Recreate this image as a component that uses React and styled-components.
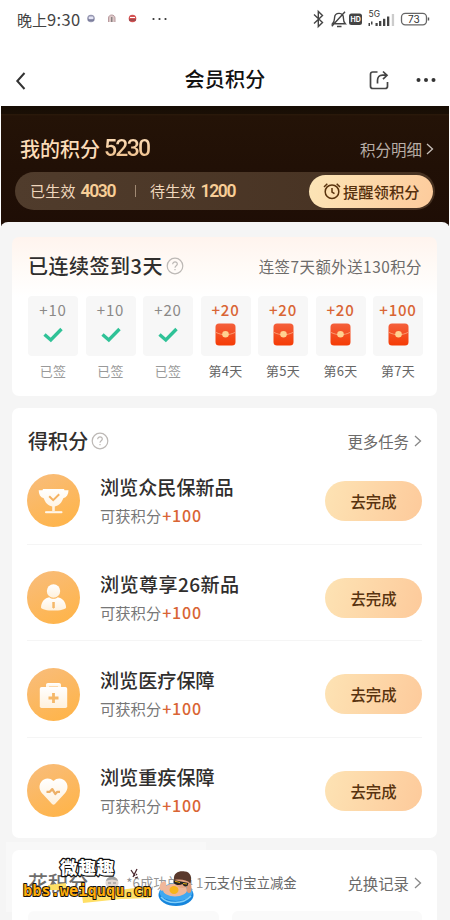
import styled, { createGlobalStyle } from 'styled-components';

const GlobalStyle = createGlobalStyle`
    * {
        box-sizing: border-box;
    }

    body {
        margin: 0;
        background: #fff;
        font-family: "Noto Sans CJK SC", "Noto Sans", sans-serif;
    }
`;

const days = [
    { points: '+10', label: '已签', done: true },
    { points: '+10', label: '已签', done: true },
    { points: '+20', label: '已签', done: true },
    { points: '+20', label: '第4天' },
    { points: '+20', label: '第5天' },
    { points: '+20', label: '第6天' },
    { points: '+100', label: '第7天' },
];

const tasks = [
    { icon: 'cup', title: '浏览众民保新品' },
    { icon: 'person', title: '浏览尊享26新品', spacing: '0.4px' },
    { icon: 'kit', title: '浏览医疗保障' },
    { icon: 'heart', title: '浏览重疾保障' },
];

const Chevron = ({ color = '#888' }) => (
    <svg width="8" height="14" viewBox="0 0 8 14" fill="none" stroke={color} strokeWidth="1.3">
        <path d="M1 2l5.5 5L1 12" />
    </svg>
);

const Help = () => (
    <svg width="18" height="18" viewBox="0 0 18 18" fill="none" stroke="#bcb8b5" strokeWidth="1.2">
        <circle cx="9" cy="9" r="7.8" />
        <path d="M6.7 7.2c0-3.2 4.8-3 4.6-.1-.1 1.6-2.3 1.7-2.3 3.6M9 12.1v1.2" />
    </svg>
);

const Check = () => (
    <svg width="20" height="16" viewBox="0 0 20 16">
        <path d="M1.5 7.5l6.3 5.500L18.500 2" fill="none" stroke="#2fc297" strokeWidth="3.4" />
    </svg>
);

const Envelope = () => (
    <svg width="21" height="23" viewBox="0 0 21 23">
        <defs>
            <linearGradient id="env" x1="0" y1="0" x2="0" y2="1">
                <stop offset="0" stopColor="#f4603c" />
                <stop offset="1" stopColor="#f53b05" />
            </linearGradient>
        </defs>
        <rect x=".5" y=".5" width="20" height="22" rx="3.5" fill="url(#env)" />
        <path d="M.8 9.300c6 3.200 13.400 3.200 19.400 0" fill="none" stroke="#f99a70" strokeWidth="1" />
        <circle cx="10.500" cy="11.200" r="3.300" fill="#ffd190" />
    </svg>
);

const StatusIcons = () => (
    <svg width="120" height="22" viewBox="0 0 120 22" fill="none" stroke="#444" strokeWidth="1.4">
        <path d="M2 6.500l8.500 8-4.200 4V3.500l4.200 4L2 15.500" />
        <path d="M20.500 15.800h12.800c-2-2-1.900-4-1.900-6 0-5.600-8.200-5.900-8.800-.5-.2 2.400 0 4.400-2.100 6.500zM25 18.500h4.500M19.800 18.300L33 3.800" />
        <rect x="37" y="5.500" width="13" height="11.500" rx="2.500" fill="#444" stroke="none" />
        <g fill="#444" stroke="none">
            <rect x="56.500" y="15" width="1.500" height="3" />
            <rect x="59" y="13.500" width="1.500" height="3" />
            <rect x="63.500" y="15" width="2.200" height="3" />
            <rect x="67" y="13" width="2.300" height="5" />
            <rect x="71" y="10.800" width="2.300" height="7.200" />
            <rect x="75" y="8.500" width="2.300" height="9.500" />
            <rect x="79.800" y="6" width="2.300" height="12" fill="#ccc" />
        </g>
        <rect x="89.500" y="5.300" width="25" height="11.500" rx="3.800" stroke="#666" strokeWidth="1.300" />
        <path d="M116.500 9.500v3" stroke="#555" />
        <g fill="#333" stroke="none" fontFamily="Inter, sans-serif">
            <text x="38.600" y="13.900" fontSize="7" fontWeight="700" fill="#fff">HD</text>
            <text x="56.500" y="9" fontSize="8.500">5G</text>
            <text x="96" y="14.700" fontSize="10">73</text>
        </g>
    </svg>
);

const TaskIcon = ({ type }) => (
    <svg width="53" height="53" viewBox="0 0 53 53">
        <defs>
            <linearGradient id="disc" x1="0" y1="0" x2=".5" y2="1">
                <stop offset="0" stopColor="#f8bd7d" />
                <stop offset="1" stopColor="#feb54e" />
            </linearGradient>
            <linearGradient id="glyph" x1="0" y1="0" x2="0" y2="1">
                <stop offset="0" stopColor="#fff" />
                <stop offset="1" stopColor="#fff1dc" />
            </linearGradient>
        </defs>
        <circle cx="26.500" cy="26.500" r="26.500" fill="url(#disc)" />
        {type === 'cup' && (
            <g fill="url(#glyph)">
                <path d="M16 15h21l.5 1.300h4c0 4-1.800 7-5.200 8-1.600 4.500-4.400 7.500-8.500 8.200V37h-2.600v-4.500c-4.100-.7-6.900-3.700-8.500-8.200-3.400-1-5-4-5-8h3.800z" />
                <rect x="18" y="37.300" width="17.500" height="1.900" rx=".9" />
                <path d="M22.200 22.300l4 3.800 6-5.800" fill="none" stroke="#f5b261" strokeWidth="2" />
            </g>
        )}
        {type === 'person' && (
            <g fill="url(#glyph)">
                <circle cx="26.500" cy="20" r="6.700" />
                <path d="M14 36.500c.3-6.300 4-9.400 8.200-10.300 2.300 2.200 6.300 2.200 8.600 0 4.200 .9 8 4 8.300 10.300C38.500 40.600 14.600 40.600 14 36.500z" />
                <path d="M25.300 31h2.500v5.300l-1.200 1.500-1.300-1.500z" fill="#f5b869" />
            </g>
        )}
        {type === 'kit' && (
            <g fill="url(#glyph)">
                <path d="M19 20.500v-3.500c0-1.200.8-2 2-2h11c1.200 0 2 .8 2 2v3.500h-3v-2H22v2z" />
                <rect x="12.800" y="19" width="27.400" height="21" rx="1.800" />
                <path d="M26.500 25v10M21.500 30h10" stroke="#f5b869" strokeWidth="2.800" />
            </g>
        )}
        {type === 'heart' && (
            <g>
                <path d="M26.500 17c4-4.200 9.800-2.900 12.400.9 3 4.300 1.500 8.700-1.900 12.400L28 40c-1 1-2 1-3 0l-9-9.700c-3.400-3.700-4.900-8.100-1.900-12.400 2.600-3.800 8.400-5.100 12.400-.9z" fill="url(#glyph)" />
                <path d="M19.500 27.800h3.300l2.500-2.700 3 4.900 2-2.200h2.700" fill="none" stroke="#edb067" strokeWidth="2.300" strokeLinejoin="round" />
            </g>
        )}
    </svg>
);

export default function App() {
    return (
        <Page>
            <GlobalStyle />

            <StatusBar>
                <Clock>晚上<span>9:30</span></Clock>
                <svg width="86" height="14" viewBox="0 0 86 14">
                    <circle cx="5" cy="6.500" r="3.800" fill="#9697b1" />
                    <rect x="2.800" y="4.500" width="4.500" height="3" rx="1" fill="#e5e5f5" />
                    <path d="M2 8h6" stroke="#65698a" />
                    <path d="M22.500 10V6c0-4 6.500-4 6.500 0v4" fill="#dcc7c7" stroke="#b99b9f" />
                    <path d="M25.800 5v5" stroke="#666" />
                    <circle cx="46.500" cy="6.500" r="3.800" fill="#d45252" />
                    <path d="M44 5.500h5" stroke="#fff" />
                    <path d="M43 8h7" stroke="#774047" />
                    <circle cx="67.500" cy="7" r="1.100" fill="#333" />
                    <circle cx="73.500" cy="7" r="1.100" fill="#333" />
                    <circle cx="79.500" cy="7" r="1.100" fill="#333" />
                </svg>
                <StatusRight><StatusIcons /></StatusRight>
            </StatusBar>

            <NavBar>
                <svg width="12" height="20" viewBox="0 0 12 20" fill="none" stroke="#333" strokeWidth="2">
                    <path d="M9.500 2L2.300 10l7.200 8" />
                </svg>
                <NavTitle>会员积分</NavTitle>
                <NavActions>
                    <svg width="20" height="20" viewBox="0 0 20 20" fill="none" stroke="#444" strokeWidth="1.700">
                        <path d="M8.500 2H3.800C2.300 2 1.500 2.800 1.500 4.200v12c0 1.500.8 2.300 2.300 2.300h12.400c1.500 0 2.300-.8 2.300-2.300V12" />
                        <path d="M8.500 13.500v-3c0-3.500 1.800-5.300 5-5.300h4M14 1.500l4 3.800-4 3.800" />
                    </svg>
                    <svg width="20" height="6" viewBox="0 0 20 6" fill="#333">
                        <circle cx="2.500" cy="3" r="2" />
                        <circle cx="10" cy="3" r="2" />
                        <circle cx="17.500" cy="3" r="2" />
                    </svg>
                </NavActions>
            </NavBar>

            <Hero>
                <HeroTop>
                    <HeroTitle>我的积分<HeroNumber>5230</HeroNumber></HeroTitle>
                    <HeroLink>积分明细<Chevron color="#c9c1bb" /></HeroLink>
                </HeroTop>
                <PointsBar>
                    <PointsItem>已生效<b>4030</b></PointsItem>
                    <PointsDivider />
                    <PointsItem>待生效<b>1200</b></PointsItem>
                    <RemindButton>
                        <svg width="18" height="18" viewBox="0 0 18 18" fill="none" stroke="#59330d" strokeWidth="1.500">
                            <circle cx="9" cy="9.700" r="6.800" />
                            <path d="M9 6v4l2.500 1.700M1 5l3.300-3.300M17 5l-3.300-3.300" />
                        </svg>
                        提醒领积分
                    </RemindButton>
                </PointsBar>
            </Hero>

            <Content>
                <CheckInCard>
                    <CardHeader>
                        <CardTitle $spacing="0.5px">已连续签到3天</CardTitle>
                        <Help />
                        <CardExtra $spacing="0.5px">连签7天额外送130积分</CardExtra>
                    </CardHeader>
                    <Days>
                        {days.map((day, index) => (
                            <Day key={index}>
                                <DayTile>
                                    <DayPoints $done={day.done}>{day.points}</DayPoints>
                                    <DayIcon>{day.done ? <Check /> : <Envelope />}</DayIcon>
                                </DayTile>
                                <DayLabel $done={day.done}>{day.label}</DayLabel>
                            </Day>
                        ))}
                    </Days>
                </CheckInCard>

                <TaskCard>
                    <CardHeader $tall>
                        <CardTitle>得积分</CardTitle>
                        <Help />
                        <CardExtra>更多任务<Chevron /></CardExtra>
                    </CardHeader>
                    {tasks.map((task) => (
                        <TaskRow key={task.icon}>
                            <TaskIcon type={task.icon} />
                            <TaskText>
                                <TaskTitle $spacing={task.spacing}>{task.title}</TaskTitle>
                                <TaskReward>可获积分<b>+100</b></TaskReward>
                            </TaskText>
                            <GoButton>去完成</GoButton>
                        </TaskRow>
                    ))}
                </TaskCard>

                <SpendCard>
                    <CardHeader $short>
                        <CardTitle>花积分</CardTitle>
                        <Ticker>
                            <svg width="14" height="14" viewBox="0 0 14 14">
                                <circle cx="7" cy="7" r="6.500" fill="#d5c5bd" />
                                <path d="M1 5c1-6 11-6 12 0-4-2-8-2-12 0z" fill="#777" />
                                <path d="M3 7h3M8 7h3" stroke="#555" />
                            </svg>
                            <span>*6成功兑换 1元支付宝立减金</span>
                        </Ticker>
                        <CardExtra>兑换记录<Chevron /></CardExtra>
                    </CardHeader>
                    <Goods>
                        <GoodsItem />
                        <GoodsItem />
                    </Goods>
                </SpendCard>
            </Content>

            <Watermark>
                <svg width="200" height="70" viewBox="0 0 200 70">
                    <path d="M42 43l18-2v7H42zM76 53l68-9 1 12-30 1-38 4z" fill="#ffdf65" />
                    <path d="M125 28l4 6M131 33l-1-1M127 35l4-8M129 36l3-1" stroke="#4b2930" strokeWidth="1.300" />
                    <g fontWeight="900" paintOrder="stroke" stroke="#111" strokeLinejoin="round">
                        <text x="54" y="32" fontFamily="Noto Sans CJK SC, sans-serif" fontSize="17.500" textLength="54" strokeWidth="2.500" fill="#fff">微趣趣</text>
                        <text x="17" y="53.500" fontFamily="DejaVu Sans Mono, monospace" fontSize="16.500" textLength="129" lengthAdjust="spacingAndGlyphs" strokeWidth="2" fill="#ffad0a">bbs.weiququ.cn</text>
                    </g>
                    <ellipse cx="170" cy="53" rx="17.500" ry="11" fill="#1685dc" />
                    <ellipse cx="170" cy="50" rx="16.500" ry="9" fill="#3fa8f2" />
                    <path d="M155 55c6 7 22 8 30-1" fill="none" stroke="#83cff9" strokeWidth="1.500" />
                    <ellipse cx="169" cy="48" rx="12" ry="6.500" fill="#efb79b" />
                    <ellipse cx="168" cy="48" rx="4.500" ry="4" fill="#f7b51b" />
                    <ellipse cx="157" cy="44" rx="3" ry="5" transform="rotate(20 157 44)" fill="#f1b79b" />
                    <ellipse cx="183" cy="46" rx="2.500" ry="5" fill="#dd9876" />
                    <ellipse cx="176.500" cy="38.500" rx="8" ry="7.500" fill="#e7a684" />
                    <path d="M168 38c-1-8 6-9.500 11-8.500 5 .5 7.500 5 5.500 12-4-4-10-4.500-16.500-3.500z" fill="#5a392c" />
                    <path d="M167.500 38l15 3-1 3c-3 1-4 0-5-2-3 2-7 1-9-1z" fill="#252323" />
                    <path d="M169 39.300l5 1.200M177 41.500l4 .5" stroke="#e3aa13" />
                </svg>
            </Watermark>
        </Page>
    );
};

const Page = styled.div`
    position: relative;
    display: flex;
    flex-direction: column;
    width: 450px;
    height: 920px;
    overflow: hidden;
`;

const StatusBar = styled.div`
    display: flex;
    flex: none;
    align-items: center;
    height: 38px;
    padding: 0 18px 0 17px;
`;

const Clock = styled.div`
    width: 69px;
    color: #444;
    font-size: 15px;
    line-height: 20px;
    white-space: nowrap;

    span {
        font-size: 16.5px;
        letter-spacing: 0.4px;
    }
`;

const StatusRight = styled.div`
    margin-left: auto;
    height: 22px;
    width: 120px;
`;

const NavBar = styled.div`
    display: grid;
    flex: none;
    grid-template-columns: 90px 1fr 90px;
    align-items: center;
    height: 68px;
    padding: 16px 14px 0 15px;

    > svg {
        margin-top: 2px;
    }
`;

const NavTitle = styled.div`
    padding: 0 1px 2px 0;
    text-align: center;
    color: #111;
    font-size: 20px;
    font-weight: 500;
    line-height: 28px;
    letter-spacing: 0.2px;
`;

const NavActions = styled.div`
    display: flex;
    align-items: center;
    justify-content: flex-end;
    gap: 27px;
`;

const Hero = styled.div`
    flex: none;
    height: 132px;
    margin: 0 1px;
    padding: 8px 14px 0;
    background: linear-gradient(#170d04 0, #1a0f05 8px, #2b1a0b 8px, #241307 10px, #211006 60px, #1e0d05);
`;

const HeroTop = styled.div`
    display: flex;
    align-items: center;
    justify-content: space-between;
    height: 58px;
    padding: 12px 1px 0 5px;
`;

const HeroTitle = styled.div`
    display: flex;
    align-items: center;
    color: #fbdcb8;
    font-size: 20px;
    font-weight: 500;
    line-height: 28px;
`;

const HeroNumber = styled.span`
    margin-left: 4px;
    font-family: Roboto, sans-serif;
    font-size: 23px;
    letter-spacing: -1.7px;
    background: linear-gradient(#ffe1bd, #eab983);
    background-clip: text;
    color: transparent;
`;

const HeroLink = styled.div`
    display: flex;
    align-items: center;
    gap: 4px;
    color: #b9aea6;
    font-size: 15.5px;
    line-height: 22px;
`;

const PointsBar = styled.div`
    display: flex;
    align-items: center;
    height: 38px;
    padding: 0 2px 0 15px;
    border-radius: 19px;
    background: linear-gradient(90deg, #503c2c, #463121);
`;

const PointsItem = styled.div`
    display: flex;
    align-items: center;
    color: #f0d8bd;
    font-size: 15px;
    line-height: 22px;
    letter-spacing: 0.2px;

    b {
        margin-left: 5px;
        color: #f8ce97;
        font-family: Roboto, sans-serif;
        font-size: 17.5px;
        font-weight: 600;
        letter-spacing: -1.4px;
    }
`;

const PointsDivider = styled.div`
    width: 1px;
    height: 12px;
    margin: 0 14px 0 20px;
    background: #a18a74;
`;

const RemindButton = styled.button`
    display: flex;
    align-items: center;
    gap: 2px;
    width: 124px;
    height: 33px;
    margin-left: auto;
    padding: 0 0 0 14px;
    border: none;
    border-radius: 17px;
    background: linear-gradient(110deg, #fce5b7, #fdcb9c);
    color: #55300d;
    font-family: inherit;
    font-size: 15.3px;
    font-weight: 500;
    white-space: nowrap;
`;

const Content = styled.div`
    display: flex;
    flex-direction: column;
    flex: none;
    gap: 12px;
    margin-top: -16px;
    padding: 15px 13px 0 12px;
    border-radius: 8px 8px 0 0;
    background: #f5f5f5;
`;

const Card = styled.div`
    flex: none;
    padding: 0 15px 0 16px;
    border-radius: 7px;
    background: #fff;
`;

const CheckInCard = styled(Card)`
    height: 159px;
    background: linear-gradient(#fff4ee, #fffaf6 28px, #fff 60px);
`;

const TaskCard = styled(Card)`
    height: 430px;
`;

const SpendCard = styled(Card)`
    height: 80px;
`;

const CardHeader = styled.div`
    display: flex;
    align-items: center;
    height: ${({ $tall, $short }) => ($tall ? '40px' : $short ? '61px' : '59px')};
    padding: ${({ $tall, $short }) => ($tall ? '25px 0 0' : $short ? '4px 0 0' : '0 0 2px')};
`;

const CardTitle = styled.div`
    margin-right: 3px;
    color: #302e2d;
    font-size: 20px;
    font-weight: 500;
    line-height: 28px;
    letter-spacing: ${({ $spacing }) => $spacing || '0.1px'};
`;

const CardExtra = styled.div`
    display: flex;
    align-items: center;
    gap: 5px;
    margin-left: auto;
    color: #6d6b6a;
    font-size: 15.4px;
    line-height: 22px;
    letter-spacing: ${({ $spacing }) => $spacing || '0'};
`;

const Days = styled.div`
    display: grid;
    grid-template-columns: repeat(7, 50px);
    gap: 7.5px;
`;

const Day = styled.div`
    display: flex;
    flex-direction: column;
    align-items: center;
`;

const DayTile = styled.div`
    display: flex;
    flex-direction: column;
    align-items: center;
    width: 50px;
    height: 60px;
    padding-top: 4px;
    border-radius: 4px;
    background: #f7f7f7;
`;

const DayPoints = styled.div`
    color: ${({ $done }) => ($done ? '#8b8987' : '#d96534')};
    font-size: 15px;
    font-weight: ${({ $done }) => ($done ? 400 : 500)};
    line-height: 20px;
    letter-spacing: 0.8px;
`;

const DayIcon = styled.div`
    display: flex;
    align-items: center;
    height: 29px;
`;

const DayLabel = styled.div`
    margin-top: 5px;
    color: ${({ $done }) => ($done ? '#999' : '#666')};
    font-size: 13px;
    line-height: 20px;
    letter-spacing: 0.3px;
    white-space: nowrap;
`;

const TaskRow = styled.div`
    display: flex;
    align-items: center;
    height: 96.7px;
    padding: 10px 0 0;
    margin-left: -1px;
    border-bottom: 1px solid #f5f5f5;

    &:last-child {
        border-bottom-color: transparent;
    }
`;

const TaskText = styled.div`
    margin-left: 20px;
`;

const TaskTitle = styled.div`
    color: #302e2d;
    font-size: 19.1px;
    font-weight: 500;
    line-height: 28px;
    letter-spacing: ${({ $spacing }) => $spacing || '0'};
`;

const TaskReward = styled.div`
    color: #777;
    font-size: 15.3px;
    line-height: 28px;

    b {
        margin-left: 1px;
        color: #d96534;
        font-size: 16px;
        font-weight: 500;
        letter-spacing: 0.8px;
    }
`;

const GoButton = styled.button`
    width: 97px;
    height: 40px;
    margin-left: auto;
    padding: 0;
    border: none;
    border-radius: 20px;
    background: linear-gradient(105deg, #fde3b4, #fdca9b);
    color: #58330f;
    font-family: inherit;
    font-size: 15.4px;
    font-weight: 500;
`;

const Ticker = styled.div`
    display: flex;
    align-items: center;
    gap: 7px;
    margin-left: 14px;
    color: #686868;
    font-size: 13.3px;
    line-height: 20px;
    white-space: nowrap;
`;

const Goods = styled.div`
    display: grid;
    grid-template-columns: 1fr 1fr;
    gap: 13px;
`;

const GoodsItem = styled.div`
    height: 40px;
    border-radius: 6px;
    background: #fafafa;
`;

/* translucent site mark lying over the bottom left corner */
const Watermark = styled.div`
    position: absolute;
    left: 6px;
    top: 842px;
    width: 200px;
    height: 70px;
    background: rgba(255, 255, 255, 0.3);
`;
